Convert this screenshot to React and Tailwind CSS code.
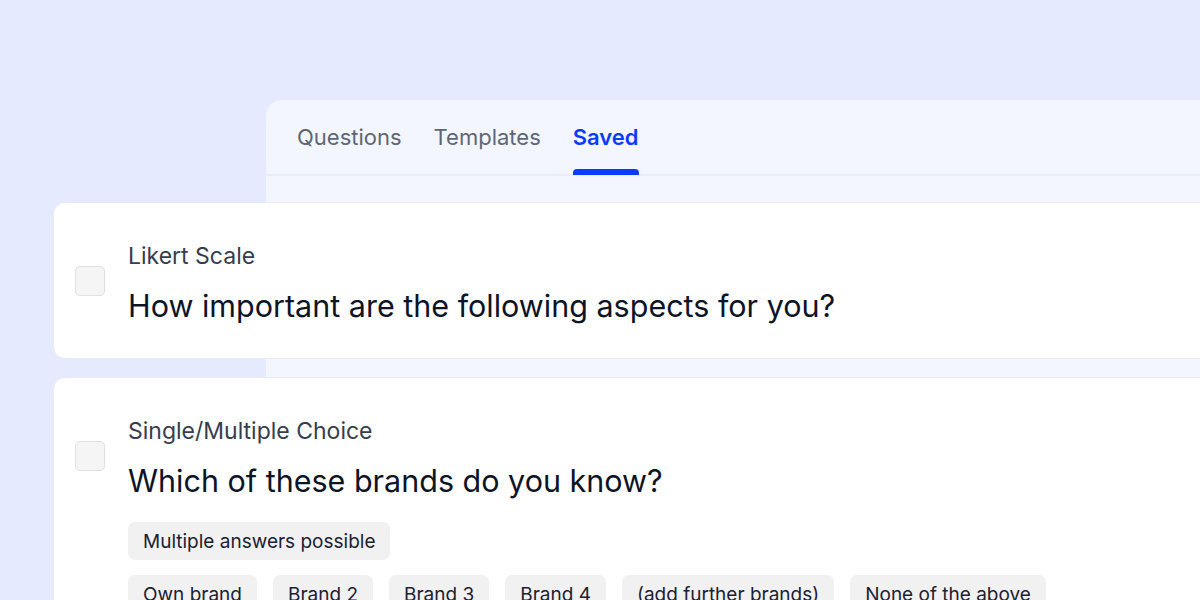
export default function App() {
  const brands = ["Own brand", "Brand 2", "Brand 3", "Brand 4", "(add further brands)", "None of the above"];
  const Chip = ({ children }) => (
    <span className="inline-flex h-[38px] items-center rounded-[7px] bg-[#f1f1f2] px-[15px] text-[19px] leading-none text-[#1b2130] whitespace-nowrap">
      {children}
    </span>
  );
  const Checkbox = () => (
    <div className="mt-[24px] h-[30px] w-[30px] shrink-0 rounded-[5px] border border-[#dfe0e3] bg-[#f5f5f6]" />
  );
  return (
    <div className="h-[600px] w-[1200px] overflow-hidden bg-[#e5eafe]" style={{ fontFamily: "Inter, 'Noto Sans', sans-serif" }}>
      <div className="ml-[266px] mt-[100px] h-[600px] w-[1000px] rounded-tl-[16px] bg-[#f3f6fe]">
        <div className="flex h-[76px] gap-[32px] border-b-2 border-[#e9edf6] pl-[31px]">
          <div className="flex items-center text-[22px] text-[#5f6677]">Questions</div>
          <div className="flex items-center text-[22px] text-[#5f6677]">Templates</div>
          <div className="relative flex items-center text-[22px] font-semibold text-[#0a3cff]">
            Saved
            <div className="absolute bottom-[-1px] left-0 right-0 h-[6px] rounded-t-[4px] bg-[#0a3cff]" />
          </div>
        </div>
        <div className="ml-[-213px] mt-[26px] flex w-[1400px] flex-col gap-[18px]">
          <div className="flex items-start gap-[23px] rounded-[12px] border border-[#e9ebef] bg-white pb-[32px] pl-[21px] pt-[39px]">
            <Checkbox />
            <div className="flex flex-col">
              <div className="text-[23px] leading-[28px] text-[#363d4d]">Likert Scale</div>
              <div className="mt-[16px] text-[30.5px] leading-[40px] text-[#0d1426]">How important are the following aspects for you?</div>
            </div>
          </div>
          <div className="flex items-start gap-[23px] rounded-[12px] border border-[#e9ebef] bg-white pb-[34px] pl-[21px] pt-[39px]">
            <Checkbox />
            <div className="flex flex-col">
              <div className="text-[23px] leading-[28px] text-[#363d4d]">Single/Multiple Choice</div>
              <div className="mt-[16px] text-[30.5px] leading-[40px] text-[#0d1426]">Which of these brands do you know?</div>
              <div className="mt-[21px] flex">
                <Chip>Multiple answers possible</Chip>
              </div>
              <div className="mt-[15px] flex gap-[16px]">
                {brands.map((b) => (
                  <Chip key={b}>{b}</Chip>
                ))}
              </div>
            </div>
          </div>
        </div>
      </div>
    </div>
  );
}
